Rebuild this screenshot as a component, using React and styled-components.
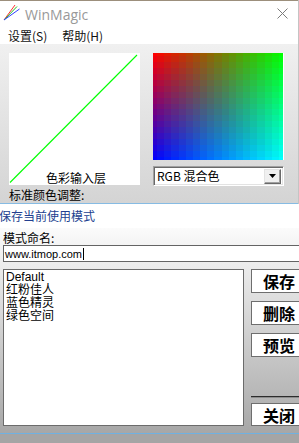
import React, { useEffect, useRef } from "react";
import styled, { createGlobalStyle } from "styled-components";

const GlobalStyle = createGlobalStyle`
  html, body {
    margin: 0;
    padding: 0;
    background: #fff;
  }
  body {
    width: 299px;
    height: 443px;
    overflow: hidden;
    font-family: "Noto Sans CJK SC", sans-serif;
    color: #000;
  }
`;

const Gradient = () => {
    const ref = useRef(null);

    useEffect(() => {
        const c = ref.current;
        const ctx = c.getContext("2d");
        const w = c.width;
        const h = c.height;
        const img = ctx.createImageData(w, h);
        const steps = 18; // blocky like the 16-bit original
        for (let y = 0; y < h; y++) {
            for (let x = 0; x < w; x++) {
                const fx = Math.round((x / (w - 1)) * steps) / steps;
                const fy = Math.round((y / (h - 1)) * steps) / steps;
                const i = (y * w + x) * 4;
                img.data[i] = 255 * (1 - fx) * (1 - fy);
                img.data[i + 1] = 255 * fx * (0.85 + 0.15 * Math.max(fx, fy));
                img.data[i + 2] = 255 * fy * (0.85 + 0.15 * Math.max(fx, fy));
                img.data[i + 3] = 255;
            }
        }
        ctx.putImageData(img, 0, 0);
    }, []);

    return <ColorCanvas ref={ref} width={130} height={107} />;
};

const App = () => {
    return (
        <Frame>
            <GlobalStyle />
            <UpperWindow>
                <TitleBar>
                    <svg width="20" height="22" viewBox="0 0 20 22">
                        <line x1="3" y1="17" x2="14" y2="2" stroke="#ff3030" strokeWidth="1" />
                        <line x1="3" y1="17" x2="16" y2="3.5" stroke="#20c020" strokeWidth="1" />
                        <line x1="3" y1="17" x2="18.5" y2="6" stroke="#3040ff" strokeWidth="1" />
                    </svg>
                    <AppTitle>WinMagic</AppTitle>
                    <CloseIcon width="11" height="11" viewBox="0 0 11 11">
                        <path d="M0.5 0.5 L10.5 10.5 M10.5 0.5 L0.5 10.5" stroke="#7c7c7c" strokeWidth="1" />
                    </CloseIcon>
                </TitleBar>
                <MenuBar>
                    <MenuItem>设置(S)</MenuItem>
                    <MenuItem>帮助(H)</MenuItem>
                </MenuBar>
                <Panel>
                    <LeftCol>
                        <InputLayer>
                            <DiagLine viewBox="0 0 131 132">
                                <line x1="1" y1="129.5" x2="128" y2="2" stroke="#00ff00" strokeWidth="1.1" />
                            </DiagLine>
                            <LayerCaption>色彩输入层</LayerCaption>
                        </InputLayer>
                        <PanelLabel>标准颜色调整:</PanelLabel>
                    </LeftCol>
                    <RightCol>
                        <Gradient />
                        <Combo>
                            <ComboText>RGB 混合色</ComboText>
                            <ComboButton>
                                <svg width="7" height="4" viewBox="0 0 7 4">
                                    <path d="M0 0 H7 L3.5 4 Z" fill="#000" />
                                </svg>
                            </ComboButton>
                        </Combo>
                    </RightCol>
                </Panel>
            </UpperWindow>

            <LowerWindow>
                <LowerTitle>保存当前使用模式</LowerTitle>
                <LowerBody>
                    <FieldLabel>模式命名:</FieldLabel>
                    <NameInput>
                        www.itmop.com
                        <Caret />
                    </NameInput>
                    <ContentRow>
                        <ModeList>
                            <ModeItem>Default</ModeItem>
                            <ModeItem>红粉佳人</ModeItem>
                            <ModeItem>蓝色精灵</ModeItem>
                            <ModeItem>绿色空间</ModeItem>
                        </ModeList>
                        <ButtonCol>
                            <ActionButton>保存</ActionButton>
                            <ActionButton>删除</ActionButton>
                            <ActionButton>预览</ActionButton>
                            <Separator />
                            <ActionButton $short>关闭</ActionButton>
                        </ButtonCol>
                    </ContentRow>
                </LowerBody>
            </LowerWindow>
            <Desktop />
        </Frame>
    );
};

export default App;

// Styled Components
const Frame = styled.div`
  width: 299px;
  height: 443px;
  overflow: hidden;
  display: flex;
  flex-direction: column;
  background: #a5a5a5;
`;

const UpperWindow = styled.div`
  width: 299px;
  box-sizing: border-box;
  border-right: 1px solid #c4c4c4;
  background: #fff;
  display: flex;
  flex-direction: column;
  flex: none;
`;

const TitleBar = styled.div`
  height: 28px;
  display: flex;
  align-items: center;
  padding-left: 1px;
  box-shadow: inset 0 1px 0 #9c8f7c;
`;

const AppTitle = styled.span`
  margin-left: 4px;
  font-family: "Open Sans", "Noto Sans", sans-serif;
  font-size: 14px;
  color: #999;
`;

const CloseIcon = styled.svg`
  margin-left: auto;
  margin-right: 10px;
  margin-top: -2px;
`;

const MenuBar = styled.div`
  height: 16px;
  display: flex;
  gap: 15px;
  padding-left: 8px;
  background: #fff;
`;

const MenuItem = styled.span`
  font-size: 12px;
  line-height: 16px;
  color: #111;
`;

const Panel = styled.div`
  height: 160px;
  box-sizing: border-box;
  border-bottom: 1px solid #86bbe3;
  background: linear-gradient(#f0f0f0, #d4d4d4);
  display: grid;
  grid-template-columns: 131px 131px;
  column-gap: 13px;
  align-items: start;
  padding: 9px 0 0 9px;
`;

const LeftCol = styled.div`
  display: flex;
  flex-direction: column;
`;

const InputLayer = styled.div`
  position: relative;
  width: 131px;
  height: 132px;
  background: #fff;
  overflow: hidden;
  display: flex;
  flex-direction: column;
  justify-content: flex-end;
`;

const DiagLine = styled.svg`
  position: absolute;
  inset: 0;
  width: 131px;
  height: 132px;
`;

const LayerCaption = styled.div`
  position: relative;
  font-size: 12px;
  line-height: 14px;
  text-align: center;
  padding-left: 3px;
`;

const PanelLabel = styled.div`
  margin-top: 3px;
  font-size: 12px;
  line-height: 14px;
`;

const RightCol = styled.div`
  display: flex;
  flex-direction: column;
  gap: 6px;
`;

const ColorCanvas = styled.canvas`
  display: block;
  width: 130px;
  height: 107px;
  border-right: 1px solid #fff;
`;

const Combo = styled.div`
  width: 131px;
  height: 20px;
  box-sizing: border-box;
  display: flex;
  align-items: center;
  background: #fff;
  border: 1px solid;
  border-color: #a0a0a0 #fff #fff #a0a0a0;
  box-shadow: inset 1px 1px 0 #696969, inset -1px -1px 0 #e3e3e3;
  padding: 0 2px 0 3px;
`;

const ComboText = styled.span`
  font-size: 12px;
  line-height: 16px;
`;

const ComboButton = styled.div`
  margin-left: auto;
  width: 17px;
  height: 15px;
  box-sizing: border-box;
  display: flex;
  align-items: center;
  justify-content: center;
  background: #f0f0f0;
  border: 1px solid;
  border-color: #e3e3e3 #696969 #696969 #e3e3e3;
  box-shadow: inset -1px -1px 0 #a0a0a0;
`;

const LowerWindow = styled.div`
  height: 230px;
  flex: none;
  box-sizing: border-box;
  border-bottom: 1px solid #6fb1e2;
  display: flex;
  flex-direction: column;
  overflow: hidden;
`;

const LowerTitle = styled.div`
  height: 24px;
  flex: none;
  background: #fff;
  font-size: 12px;
  line-height: 24px;
  color: #223f90;
  margin-left: -1px;
  white-space: nowrap;
`;

const LowerBody = styled.div`
  flex: 1;
  display: flex;
  flex-direction: column;
  padding-left: 3px;
  background: linear-gradient(#fbfbfb, #a7a7a7);
  overflow: hidden;
`;

const FieldLabel = styled.div`
  margin-top: 3px;
  font-size: 12px;
  line-height: 14px;
`;

const NameInput = styled.div`
  width: 300px;
  height: 17px;
  flex: none;
  box-sizing: border-box;
  background: #fff;
  border: 1px solid #646464;
  border-right: none;
  display: flex;
  align-items: center;
  padding-left: 1px;
  font-family: "Liberation Sans", Arial, sans-serif;
  font-size: 11px;
`;

const Caret = styled.span`
  width: 1px;
  height: 12px;
  background: #000;
  margin-left: 1px;
`;

const ContentRow = styled.div`
  margin-top: 7px;
  display: flex;
  gap: 7px;
  height: 157px;
  width: 310px;
  flex: none;
`;

const ModeList = styled.div`
  width: 241px;
  height: 157px;
  flex: none;
  box-sizing: border-box;
  background: #fff;
  border: 1px solid #6b6b6b;
  padding: 1px 2px;
`;

const ModeItem = styled.div`
  font-family: "Liberation Sans", "Noto Sans CJK SC", sans-serif;
  font-size: 12px;
  line-height: 13px;
`;

const ButtonCol = styled.div`
  width: 56px;
  flex: none;
  display: flex;
  flex-direction: column;
  gap: 8px;
`;

const ActionButton = styled.div`
  height: ${(p) => (p.$short ? "23px" : "24px")};
  box-sizing: border-box;
  background: #fff;
  border: 1px solid #6e6e6e;
  display: flex;
  align-items: center;
  justify-content: center;
  font-size: 16px;
  font-weight: 700;
  flex: none;
`;

const Separator = styled.div`
  margin-top: auto;
  margin-bottom: -3px;
  height: 2px;
  box-sizing: border-box;
  border-top: 1px solid #2c2c2c;
  border-bottom: 1px solid #8c8c8c;
`;

const Desktop = styled.div`
  flex: 1;
  background: #a5a5a5;
`;
